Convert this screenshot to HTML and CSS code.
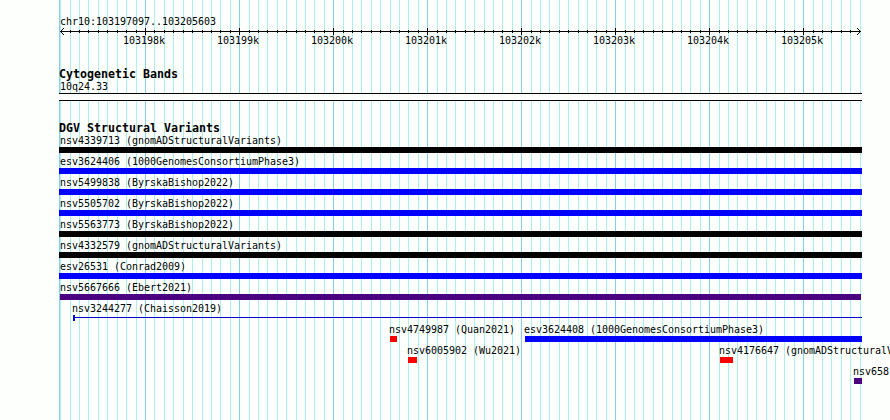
FILE: index.html
```html
<!DOCTYPE html>
<html lang="en">
<head>
<meta charset="utf-8">
<title>DGV Structural Variants</title>
<link rel="stylesheet" href="styles.css">
</head>
<body>
<main class="browser">
  <svg class="grid" width="890" height="420" shape-rendering="crispEdges" aria-hidden="true"><path id="minor"/><path id="major"/></svg>
  <section class="ruler">
    <p class="region">chr10:103197097..103205603</p>
    <svg class="axis" width="802" height="7" shape-rendering="crispEdges" aria-hidden="true"><path id="ticks"/></svg>
    <div class="scale"><span>103198k</span><span>103199k</span><span>103200k</span><span>103201k</span><span>103202k</span><span>103203k</span><span>103204k</span><span>103205k</span></div>
  </section>
  <section class="bands">
    <h2>Cytogenetic Bands</h2>
    <p>10q24.33</p>
    <div class="band"></div>
  </section>
  <section class="variants">
    <h2>DGV Structural Variants</h2>
    <div class="row"><p>nsv4339713 (gnomADStructuralVariants)</p><i class="bar black"></i></div>
    <div class="row"><p>esv3624406 (1000GenomesConsortiumPhase3)</p><i class="bar blue"></i></div>
    <div class="row"><p>nsv5499838 (ByrskaBishop2022)</p><i class="bar blue"></i></div>
    <div class="row"><p>nsv5505702 (ByrskaBishop2022)</p><i class="bar blue"></i></div>
    <div class="row"><p>nsv5563773 (ByrskaBishop2022)</p><i class="bar black"></i></div>
    <div class="row"><p>nsv4332579 (gnomADStructuralVariants)</p><i class="bar black"></i></div>
    <div class="row"><p>esv26531 (Conrad2009)</p><i class="bar blue"></i></div>
    <div class="row"><p>nsv5667666 (Ebert2021)</p><i class="bar indigo inset"></i></div>
    <div class="row chaisson"><p>nsv3244277 (Chaisson2019)</p><i class="bar thin"></i></div>
    <div class="row pair">
      <div class="quan"><p>nsv4749987 (Quan2021)</p><i class="bar red"></i></div>
      <div class="phase"><p>esv3624408 (1000GenomesConsortiumPhase3)</p><i class="bar blue"></i></div>
    </div>
    <div class="row pair">
      <div class="wu"><p>nsv6005902 (Wu2021)</p><i class="bar red"></i></div>
      <div class="gnomad"><p>nsv4176647 (gnomADStructuralVariants)</p><i class="bar red"></i></div>
    </div>
    <div class="row last"><p>nsv658</p><i class="bar indigo"></i></div>
  </section>
</main>
<script src="grid.js"></script>
</body>
</html>
```
FILE: styles.css
```css
* { box-sizing: border-box; margin: 0; padding: 0; }
body { width: 890px; height: 420px; overflow: hidden; background: #fdfffc; color: #000; font: 10px/12px "DejaVu Sans Mono", monospace; letter-spacing: -0.02px; }
.browser { position: relative; width: 890px; height: 420px; overflow: hidden; padding: 15px 0 0 59px; }
.grid { position: absolute; left: 0; top: 0; z-index: -1; }
#minor { stroke: #afeeee; fill: none; }
#major { stroke: #87ceeb; fill: none; }
#ticks { stroke: #000; fill: none; }
p { white-space: nowrap; height: 12px; line-height: 14px; padding-left: 1px; }
h2 { font-size: 11.63px; line-height: 13px; font-weight: bold; height: 12px; white-space: nowrap; letter-spacing: 0; }
.ruler { height: 53px; }
.region { height: 13px; }
.axis { display: block; }
.scale { display: flex; padding-left: 38px; }
.scale span { width: 94px; flex: none; text-align: center; }
.bands { height: 54px; }
.band { width: 803px; height: 8px; margin-top: 1px; border: solid #000; border-width: 1px 0; background: #fdfffc; }
.row { height: 21px; width: 803px; }
.bar { display: block; height: 6px; margin-top: 1px; }
.black { background: #000; }
.blue { background: #00f; }
.indigo { background: #4b0082; }
.red { background: #f00; }
.inset { margin-left: 1px; margin-right: 1px; }
.chaisson { padding-left: 14px; }
.thin { border-left: 2px solid #00f; background: linear-gradient(#0000cd, #0000cd) 0 2px / 100% 1px no-repeat; }
.chaisson p, .pair p, .last p { padding-left: 0; margin-left: -1px; }
.pair { display: flex; }
.pair > div { flex: none; }
.quan { width: 135px; margin-left: 331px; }
.quan .bar { width: 7px; }
.phase { width: 337px; }
.wu { width: 312px; margin-left: 349px; }
.wu .bar { width: 9px; }
.gnomad .bar { width: 13px; }
.last { padding-left: 795px; }
```
FILE: grid.js
```
const offsets = [0, 10, 19, 28, 38, 47, 57, 66, 75, 85];
const rounded = { 89: 88, 108: 107, 155: 154 };
let minor = "M60.5 0V420", major = "M59.5 0V420";
let ticks = "M1 3.5H802M4.5 0v1M3.5 1v1M2.5 2v1M2.5 4v1M3.5 5v1M4.5 6v1M798.5 0v1M799.5 1v1M800.5 2v1M800.5 4v1M799.5 5v1M798.5 6v1";
for (let start = 51; start < 862; start += 94) {
  offsets.forEach((offset, index) => {
    const x = rounded[start + offset] || start + offset;
    if (x < 66 || x > 861) return;
    if (index) minor += `M${x + .5} 0V420`;
    else major += `M${x + .5} 0V420`;
    if (x < 859) ticks += index ? `M${x - 58.5} 2v3` : `M${x - 58.5} 0v7`;
  });
}
document.getElementById("minor").setAttribute("d", minor);
document.getElementById("major").setAttribute("d", major);
document.getElementById("ticks").setAttribute("d", ticks);
```
